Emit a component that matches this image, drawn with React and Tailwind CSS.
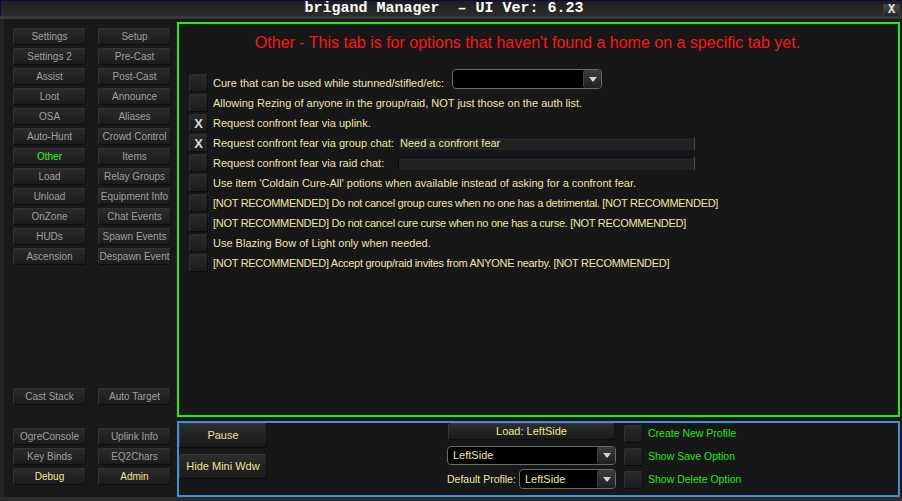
import React from "react";

// brigand Manager – "Other" tab

const NAV = [
  [{ t: "Settings" }, { t: "Setup" }],
  [{ t: "Settings 2" }, { t: "Pre-Cast" }],
  [{ t: "Assist" }, { t: "Post-Cast" }],
  [{ t: "Loot" }, { t: "Announce" }],
  [{ t: "OSA" }, { t: "Aliases" }],
  [{ t: "Auto-Hunt" }, { t: "Crowd Control" }],
  [{ t: "Other", c: "green" }, { t: "Items" }],
  [{ t: "Load" }, { t: "Relay Groups" }],
  [{ t: "Unload" }, { t: "Equipment Info" }],
  [{ t: "OnZone" }, { t: "Chat Events" }],
  [{ t: "HUDs" }, { t: "Spawn Events" }],
  [{ t: "Ascension" }, { t: "Despawn Event" }],
];

const TOOLS = [
  [{ t: "OgreConsole" }, { t: "Uplink Info" }],
  [{ t: "Key Binds" }, { t: "EQ2Chars" }],
  [{ t: "Debug", c: "yellow" }, { t: "Admin", c: "yellow" }],
];

const OPTIONS = [
  { text: "Allowing Rezing of anyone in the group/raid, NOT just those on the auth list." },
  { text: "Request confront fear via uplink.", on: true },
];

const MORE = [
  "Use item 'Coldain Cure-All' potions when available instead of asking for a confront fear.",
  "[NOT RECOMMENDED] Do not cancel group cures when no one has a detrimental. [NOT RECOMMENDED]",
  "[NOT RECOMMENDED] Do not cancel cure curse when no one has a curse. [NOT RECOMMENDED]",
  "Use Blazing Bow of Light only when needed.",
  "[NOT RECOMMENDED] Accept group/raid invites from ANYONE nearby. [NOT RECOMMENDED]",
];

function NavBtn({ t, c }) {
  const color =
    c === "green" ? "text-[#22ff22]" : c === "yellow" ? "text-[#f3e69a]" : "text-[#a0a0a0]";
  return (
    <div
      className={`w-[73px] h-[17px] rounded-[2px] border border-[#333] border-b-[#0d0d0d] border-r-[#111] bg-linear-to-b from-[#2b2b2b] to-[#1b1b1b] flex items-center justify-center overflow-hidden whitespace-nowrap text-[10px] leading-none ${color}`}
    >
      {t}
    </div>
  );
}

function Check({ on }) {
  return (
    <div className="w-[19px] h-[18px] shrink-0 rounded-[2px] border border-[#303030] border-b-[#0c0c0c] border-r-[#0f0f0f] bg-linear-to-b from-[#2a2a2a] to-[#1c1c1c] flex items-center justify-center text-[13px] font-bold leading-none text-[#dadada]">
      {on ? "X" : null}
    </div>
  );
}

function Select({ value, className }) {
  return (
    <div className={`flex rounded-[4px] border border-[#6a6a6a] bg-black overflow-hidden ${className}`}>
      <div className="flex-1 pl-[5px] flex items-center text-[11px] leading-none text-[#f0e6a8]">{value}</div>
      <div className="w-[18px] border-l border-[#444] rounded-[3px] bg-linear-to-b from-[#3c3c3c] to-[#1f1f1f] flex items-center justify-center">
        <svg width="8" height="5" viewBox="0 0 8 5">
          <path d="M0 0h8L4 5z" fill="#d4d4d4" />
        </svg>
      </div>
    </div>
  );
}

function Field({ value }) {
  return (
    <div className="w-[298px] h-[15px] rounded-[2px] border border-[#15152a] border-r-[#4a4a4a] bg-[#222] flex items-center pl-[2px] text-[11px] leading-none text-[#f0e6a8] shadow-[inset_1px_1px_0_#0c0c0c]">
      {value}
    </div>
  );
}

function Row({ on, children }) {
  return (
    <div className="h-[20px] flex items-center">
      <Check on={on} />
      <div className="pl-[5px] flex items-center text-[11px] leading-none text-[#f0e6a8] whitespace-nowrap">
        {children}
      </div>
    </div>
  );
}

function BigBtn({ children, className }) {
  return (
    <div
      className={`rounded-[3px] border border-[#383838] border-b-[#0c0c0c] border-r-[#111] bg-linear-to-b from-[#2d2d2d] to-[#191919] flex items-center justify-center text-[11px] leading-none text-[#f0e49c] ${className}`}
    >
      {children}
    </div>
  );
}

export default function App() {
  return (
    <div
      className="w-[902px] h-[501px] bg-[#191919] flex flex-col overflow-hidden"
      style={{ fontFamily: '"Liberation Sans", Arial, sans-serif' }}
    >
      {/* title bar */}
      <div className="h-[16px] flex items-center border-t border-l border-[#0b0b45] bg-linear-to-b from-[#1e1e1e] to-[#2c2c2c]">
        <div
          className="flex-1 pl-[4px] text-center text-[15px] font-bold leading-none text-white whitespace-pre"
          style={{ fontFamily: '"Liberation Mono", "Courier New", monospace' }}
        >
          brigand Manager  – UI Ver: 6.23
        </div>
        <div
          className="w-[17px] h-[13px] mr-[2px] mt-[3px] border border-[#3a3a3a] bg-linear-to-b from-[#4a4a4a] to-[#262626] flex items-center justify-center text-[12px] font-bold leading-none text-[#e6e6e6]"
          style={{ fontFamily: '"Liberation Mono", monospace' }}
        >
          X
        </div>
      </div>
      <div className="h-[3px] bg-[#393939]" />

      {/* body */}
      <div className="flex-1 flex min-h-0">
        {/* left nav */}
        <div className="w-[177px] shrink-0 border-l-[4px] border-[#232323] pl-[9px] pt-[9px] flex flex-col">
          <div className="grid grid-cols-[73px_73px] gap-x-[12px] gap-y-[3px]">
            {NAV.flat().map((b) => (
              <NavBtn key={b.t} {...b} />
            ))}
          </div>
          <div className="mt-[123px] grid grid-cols-[73px_73px] gap-x-[12px]">
            <NavBtn t="Cast Stack" />
            <NavBtn t="Auto Target" />
          </div>
          <div className="mt-[23px] grid grid-cols-[73px_73px] gap-x-[12px] gap-y-[3px]">
            {TOOLS.flat().map((b) => (
              <NavBtn key={b.t} {...b} />
            ))}
          </div>
        </div>

        {/* right side */}
        <div className="w-[723px] pt-[3px] flex flex-col">
          <div className="h-[395px] border-2 border-[#1cf01c] bg-[#171717] pl-[10px] pt-[9px]">
            <div className="h-[20px] flex items-center justify-center pr-[32px] text-[16px] leading-none text-[#ff1515] whitespace-nowrap">
              Other - This tab is for options that haven't found a home on a specific tab yet.
            </div>
            <div className="mt-[20px] flex flex-col">
              <Row>
                <span className="w-[239px]">Cure that can be used while stunned/stifled/etc:</span>
                <Select value="" className="w-[150px] h-[20px] mb-[8px]" />
              </Row>
              {OPTIONS.map((o) => (
                <Row key={o.text} on={o.on}>
                  {o.text}
                </Row>
              ))}
              <Row on>
                <span className="w-[184px]">Request confront fear via group chat:</span>
                <Field value="Need a confront fear" />
              </Row>
              <Row>
                <span className="w-[184px]">Request confront fear via raid chat:</span>
                <Field value="" />
              </Row>
              {MORE.map((t) => (
                <Row key={t}>
                  <span className={t.startsWith("[") ? "tracking-[-0.3px]" : ""}>{t}</span>
                </Row>
              ))}
            </div>
          </div>

          <div className="mt-[4px] h-[76px] border-2 border-[#3f8fdc] bg-[#171717] flex">
            <div className="w-[88px] flex flex-col gap-[6px]">
              <BigBtn className="h-[25px]">Pause</BigBtn>
              <BigBtn className="h-[25px]">Hide Mini Wdw</BigBtn>
            </div>
            <div className="ml-[180px] w-[169px] flex flex-col">
              <BigBtn className="mx-[1px] h-[17px]">Load: LeftSide</BigBtn>
              <Select value="LeftSide" className="mt-[6px] h-[19px]" />
              <div className="mt-[4px] h-[20px] flex items-center">
                <span className="w-[72px] text-[10.5px] leading-none text-[#f0e6a8] whitespace-nowrap">
                  Default Profile:
                </span>
                <Select value="LeftSide" className="flex-1 h-[20px]" />
              </div>
            </div>
            <div className="ml-[8px] pt-[1px] flex flex-col gap-[4px]">
              {["Create New Profile", "Show Save Option", "Show Delete Option"].map((t) => (
                <div key={t} className="h-[19px] flex items-center">
                  <Check />
                  <span className="pl-[5px] text-[10.5px] leading-none text-[#22e822]">{t}</span>
                </div>
              ))}
            </div>
          </div>
        </div>
      </div>
      <div className="h-[4px] bg-[#2c2c2c]" />
    </div>
  );
}
